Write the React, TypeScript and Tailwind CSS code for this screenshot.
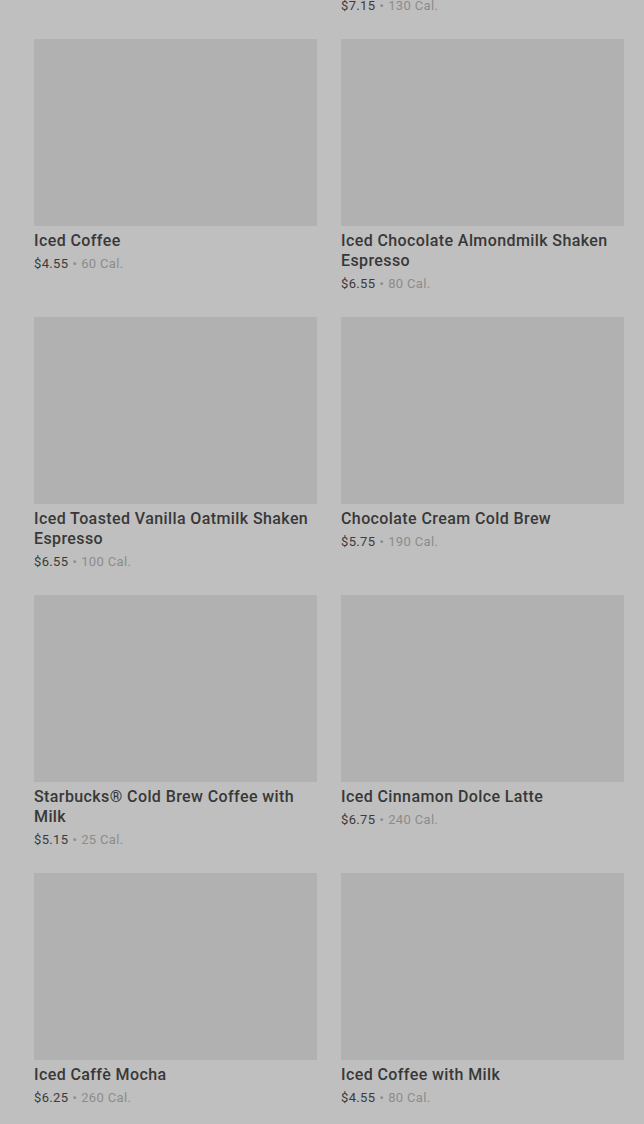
const items = [
  { name: 'Iced Coffee', price: '$4.55', cal: '60 Cal.' },
  { name: 'Iced Chocolate Almondmilk Shaken Espresso', price: '$6.55', cal: '80 Cal.' },
  { name: 'Iced Toasted Vanilla Oatmilk Shaken Espresso', price: '$6.55', cal: '100 Cal.' },
  { name: 'Chocolate Cream Cold Brew', price: '$5.75', cal: '190 Cal.' },
  { name: 'Starbucks® Cold Brew Coffee with Milk', price: '$5.15', cal: '25 Cal.' },
  { name: 'Iced Cinnamon Dolce Latte', price: '$6.75', cal: '240 Cal.' },
  { name: 'Iced Caffè Mocha', price: '$6.25', cal: '260 Cal.' },
  { name: 'Iced Coffee with Milk', price: '$4.55', cal: '80 Cal.' },
];

function Price({ price, cal }: { price: string; cal: string }) {
  return (
    <p className="text-[13px] leading-[18px] tracking-[0.35px] text-[#3b3b3b]">
      {price}
      <span className="mx-[4px] text-[#8c8c8c]">•</span>
      <span className="text-[#8c8c8c]">{cal}</span>
    </p>
  );
}

export default function App() {
  return (
    <div className="h-[1124px] overflow-hidden bg-[#bfbfbf] pl-[34px] pr-[20px] font-['Roboto',sans-serif]">
      <div className="grid grid-cols-2 gap-x-[24px] gap-y-[24px]">
        <div />
        <div className="-mt-[3px]">
          <Price price="$7.15" cal="130 Cal." />
        </div>
        {items.map((it) => (
          <div key={it.name} className="flex flex-col">
            <div className="h-[187px] bg-[#b1b1b1]" />
            <h3 className="mt-[5px] text-[16px] font-medium leading-[20px] tracking-[0.4px] text-[#383838]">
              {it.name}
            </h3>
            <div className="mt-[4px]">
              <Price price={it.price} cal={it.cal} />
            </div>
          </div>
        ))}
      </div>
    </div>
  );
}
